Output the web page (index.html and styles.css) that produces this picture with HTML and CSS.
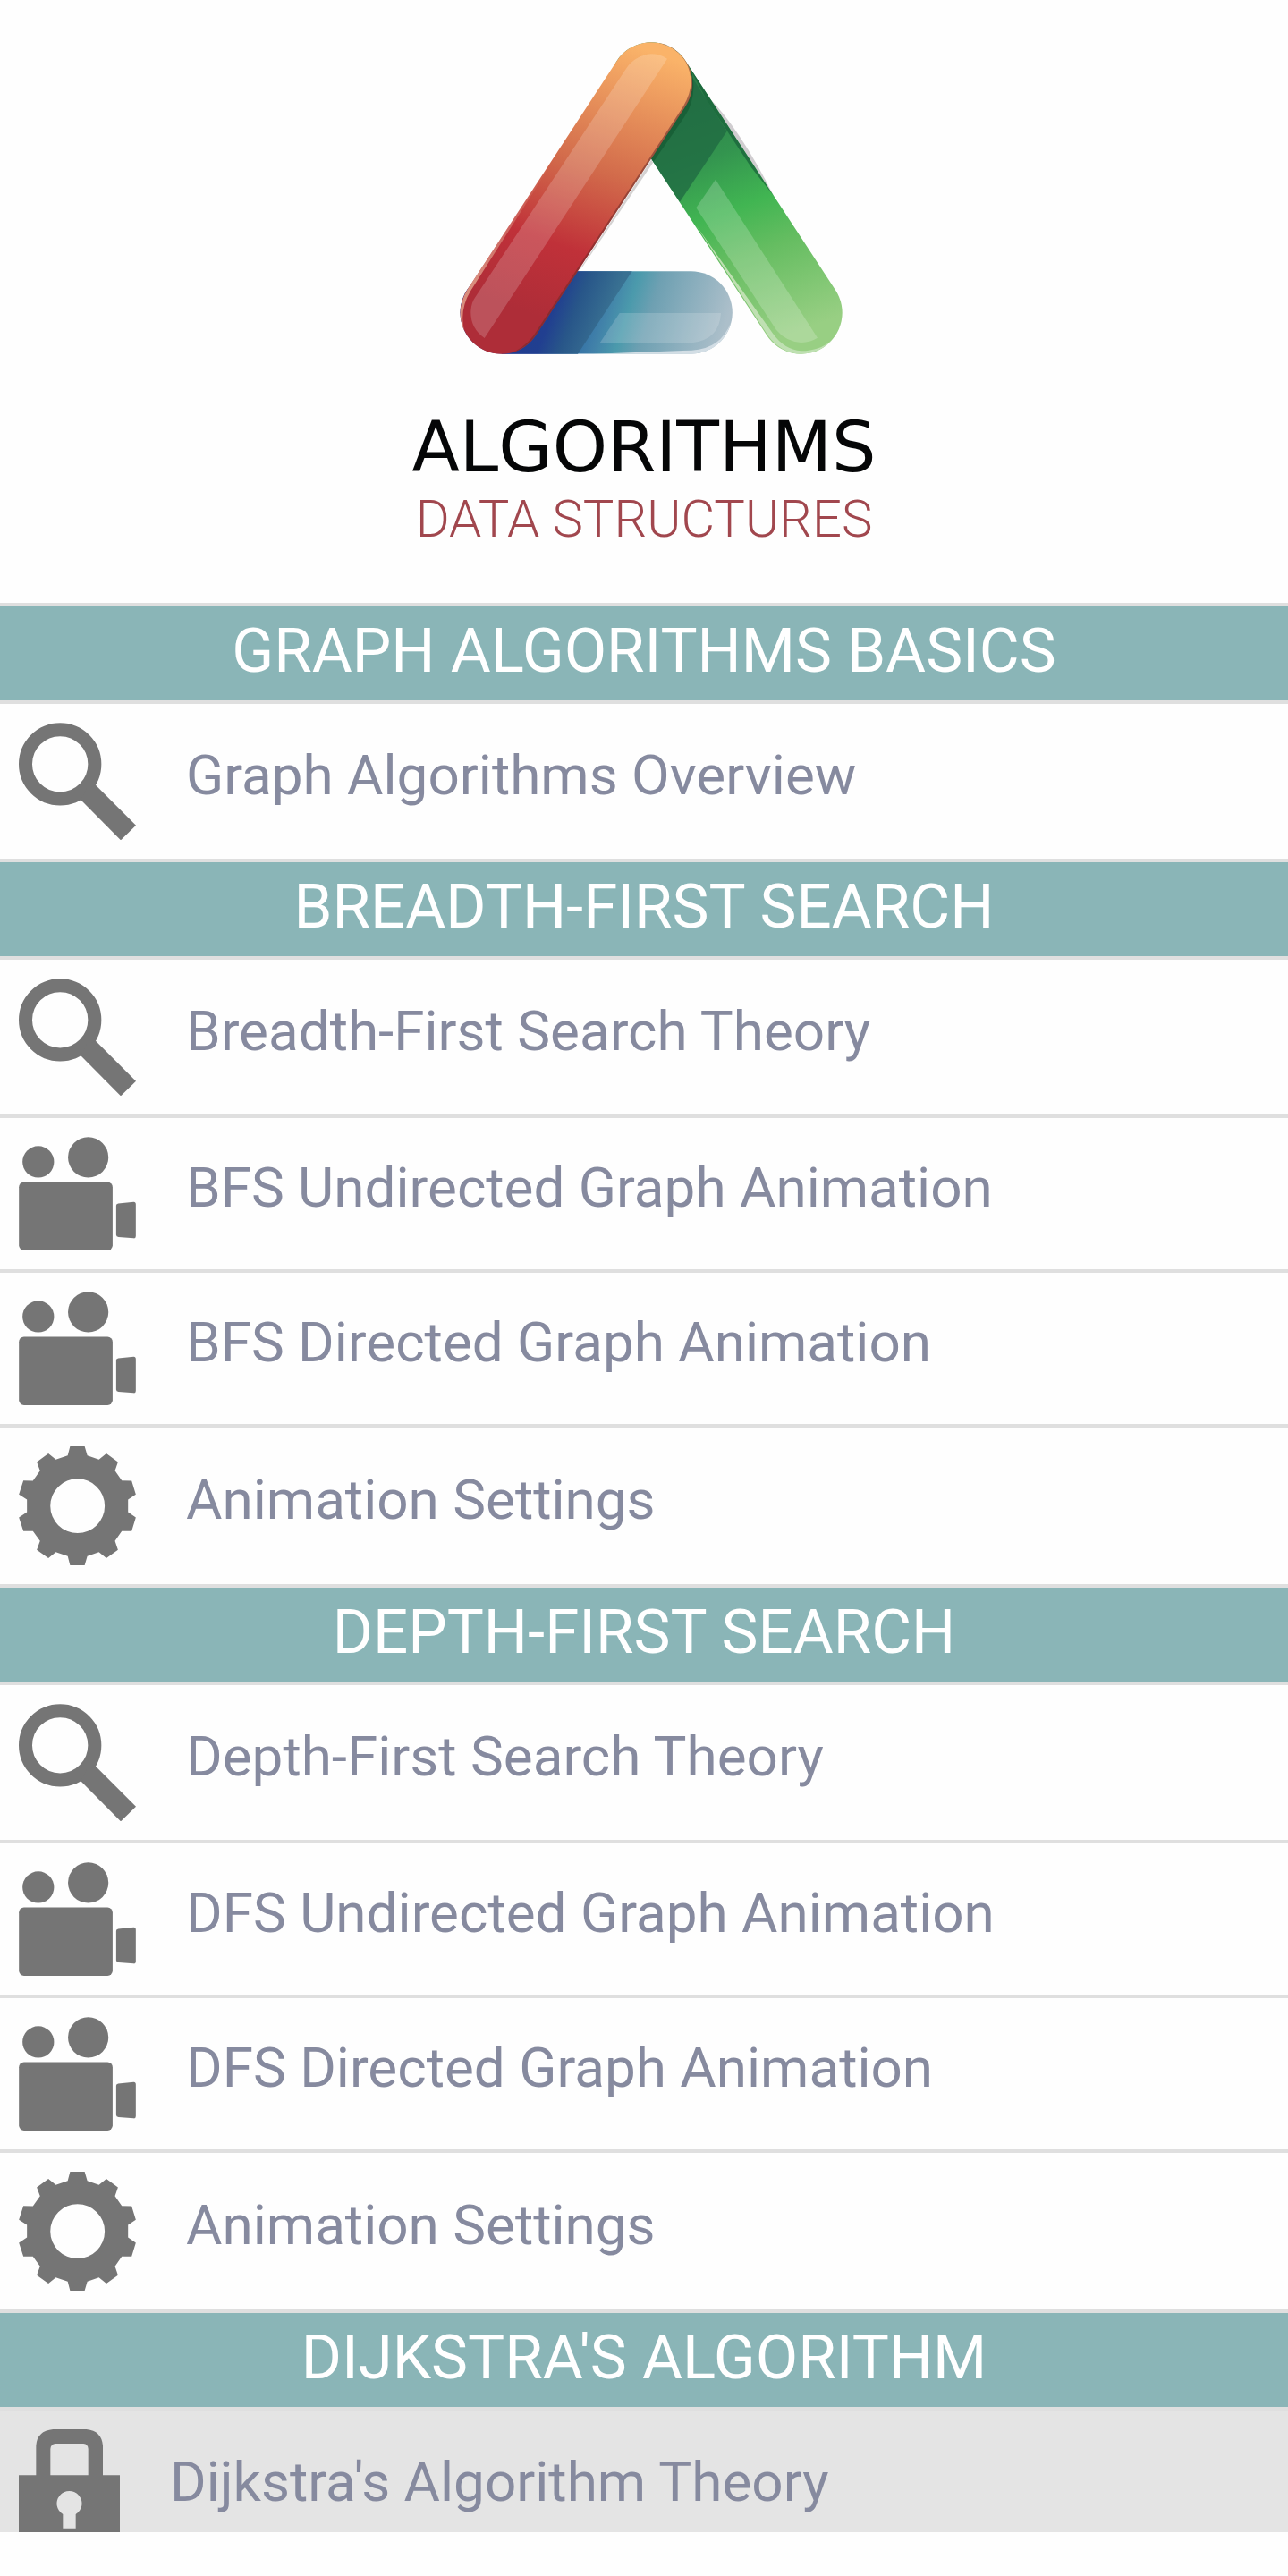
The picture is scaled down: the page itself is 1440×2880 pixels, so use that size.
FILE: index.html
```
<!DOCTYPE html>
<html lang="en">
  <head>
    <title>Algorithms - Data Structures</title>
    <meta charset="UTF-8">
    <meta name="viewport" content="width=device-width,initial-scale=1">
    <link rel="stylesheet" href="styles.css">
  </head>
  <body>
    <!-- icons shared by the menu rows -->
    <svg class="sprite" width="0" height="0" aria-hidden="true">
      <symbol id="icon-search" viewBox="63 443 393 393">
        <circle cx="201.500" cy="582" r="116" fill="none" stroke="currentColor" stroke-width="45"/>
        <path d="M321 652L456 787L405 837L271 702L290 665Z" fill="currentColor"/>
      </symbol>
      <symbol id="icon-camera" viewBox="63 122 393 382">
        <circle cx="128" cy="206" r="53" fill="currentColor"/>
        <circle cx="296" cy="191" r="68" fill="currentColor"/>
        <rect x="63" y="274" width="315" height="230" rx="17" fill="currentColor"/>
        <path d="M397 346L449 341Q456 341 456 349V456Q456 464 449 463L398 459Q390 458 390 451V353Q390 347 397 346Z" fill="currentColor"/>
      </symbol>
      <symbol id="icon-gear" viewBox="63 110 393 400">
        <path fill="currentColor" fill-rule="evenodd" d="M235 110H284L293 141L332 154L357 134L396 163L386 192L409 225L442 226L456 272L430 289V331L456 349L442 395H409L386 428L396 458L357 486L332 466L293 479L284 510H235L227 479L187 466L162 486L123 458L134 428L110 395H78L63 349L90 331V289L63 272L78 225L110 226L134 192L123 163L162 134L187 154L227 141ZM260 219A91 91 0 1 0 260 402A91 91 0 1 0 260 219Z"/>
      </symbol>
      <symbol id="icon-lock" viewBox="63 435 339 393">
        <path fill="currentColor" fill-rule="evenodd" d="M63 589H121V490Q124 440 178 435H290Q341 440 345 490V589H402V828H63ZM169 589H296V501Q295 485 280 483H187Q170 484 169 501ZM211 720V767H254V720A42 42 0 1 0 211 720Z"/>
      </symbol>
    </svg>

    <header class="brand">
      <svg class="brand-logo" viewBox="-60 0 1500 1170" role="img" aria-label="Algorithms logo">
        <defs>
          <linearGradient id="green" gradientUnits="userSpaceOnUse" x1="880" y1="180" x2="1230" y2="1120">
            <stop offset="0" stop-color="#2b7d48"/>
            <stop offset="0.250" stop-color="#33944f"/>
            <stop offset="0.440" stop-color="#41b552"/>
            <stop offset="0.600" stop-color="#65bd61"/>
            <stop offset="0.900" stop-color="#98cf83"/>
          </linearGradient>
          <linearGradient id="red" gradientUnits="userSpaceOnUse" x1="790" y1="110" x2="470" y2="1020">
            <stop offset="0" stop-color="#fab369"/>
            <stop offset="0.450" stop-color="#d26b4b"/>
            <stop offset="0.740" stop-color="#c03139"/>
            <stop offset="1" stop-color="#ae2d38"/>
          </linearGradient>
          <linearGradient id="blue" gradientUnits="userSpaceOnUse" x1="360" y1="900" x2="940" y2="1080">
            <stop offset="0" stop-color="#223d90"/>
            <stop offset="0.150" stop-color="#2660a3"/>
            <stop offset="0.340" stop-color="#4181a9"/>
            <stop offset="0.460" stop-color="#4b9aac"/>
            <stop offset="0.580" stop-color="#6ea0b2"/>
            <stop offset="1" stop-color="#acbfca"/>
          </linearGradient>
          <linearGradient id="shade" gradientUnits="userSpaceOnUse" x1="300" y1="900" x2="560" y2="1000">
            <stop offset="0" stop-color="#203c90"/>
            <stop offset="0.350" stop-color="#213f90"/>
            <stop offset="0.600" stop-color="#285689"/>
            <stop offset="1" stop-color="#397192"/>
          </linearGradient>
          <linearGradient id="edge" gradientUnits="userSpaceOnUse" x1="200" y1="900" x2="600" y2="300">
            <stop offset="0" stop-color="#d98d7d"/>
            <stop offset="0.650" stop-color="#d98d7d" stop-opacity="0"/>
          </linearGradient>
          <clipPath id="green-bar">
            <path d="M830 114L1332 884A138 138 0 0 1 1102 1036L598 266Z"/>
          </clipPath>
        </defs>

        <!-- green leg -->
        <path d="M905 235Q1010 340 1125 567L1080 520Z" fill="#d0cdd0"/>
        <path d="M714 190L1217 959" stroke="url(#green)" stroke-width="276" stroke-linecap="round"/>
        <g clip-path="url(#green-bar)">
          <path d="M800 90L968 350L810 587L690 410Z" fill="#1f6841" opacity="0.750"/>
          <path d="M838 128L1125 567L1050 472L900 245Z" fill="#176039" opacity="0.700"/>
          <path d="M850 150Q870 235 825 303L722 452L700 420L820 150Z" fill="#175c34" opacity="0.800"/>
        </g>
        <path d="M866 668L1106 1036Q1150 1096 1217 1097Q1285 1093 1321 1050Q1280 1087 1217 1087Q1160 1082 1122 1028Z" fill="#bfe0b2"/>
        <path d="M930 512L1272 1043Q1250 1057 1217 1059Q1165 1055 1134 1017L865 607Z" fill="#fff" opacity="0.200"/>

        <!-- blue base -->
        <path d="M212 958H848" stroke="url(#blue)" stroke-width="277" stroke-linecap="round"/>
        <path d="M440 820H650L468 1097H212Z" fill="url(#shade)"/>
        <path d="M520 1097H848Q955 1090 982 990Q948 1080 850 1085Z" fill="#d3dee5"/>
        <path d="M608 960H948Q943 1050 850 1060H542Z" fill="#fff" opacity="0.170"/>

        <!-- red leg -->
        <path d="M715 445L720 456L484 805L470 820Z" fill="#d4d2d2"/>
        <path d="M714 190L212 959" stroke="url(#red)" stroke-width="276" stroke-linecap="round"/>
        <path d="M740 54Q800 62 838 128Q872 205 830 266L328 1033Q300 1078 240 1095Q285 1080 320 1035L822 266Q868 190 830 118Q800 67 740 54Z" fill="#682b29" opacity="0.550"/>
        <path d="M598 114L97 882Q57 950 87 1020Q70 950 107 888Z" fill="url(#edge)"/>
        <path d="M768 107L155 1044Q108 1012 109 955Q110 925 126 904L630 140Q660 96 714 91Q743 91 768 107Z" fill="#fff" opacity="0.180"/>
      </svg>
      <h1 class="brand-name">ALGORITHMS</h1>
      <p class="brand-tagline">DATA STRUCTURES</p>
    </header>

    <main>
      <section>
        <h2 class="section-title">GRAPH ALGORITHMS BASICS</h2>
        <nav class="menu">
          <a class="menu-item" href="#graph-overview">
            <svg class="icon icon-search"><use href="#icon-search"/></svg>
            <span class="menu-label">Graph Algorithms Overview</span>
          </a>
        </nav>
      </section>

      <section>
        <h2 class="section-title">BREADTH-FIRST SEARCH</h2>
        <nav class="menu">
          <a class="menu-item" href="#bfs-theory">
            <svg class="icon icon-search"><use href="#icon-search"/></svg>
            <span class="menu-label">Breadth-First Search Theory</span>
          </a>
          <a class="menu-item" href="#bfs-undirected">
            <svg class="icon icon-camera"><use href="#icon-camera"/></svg>
            <span class="menu-label">BFS Undirected Graph Animation</span>
          </a>
          <a class="menu-item" href="#bfs-directed">
            <svg class="icon icon-camera"><use href="#icon-camera"/></svg>
            <span class="menu-label">BFS Directed Graph Animation</span>
          </a>
          <a class="menu-item" href="#bfs-settings">
            <svg class="icon icon-gear"><use href="#icon-gear"/></svg>
            <span class="menu-label">Animation Settings</span>
          </a>
        </nav>
      </section>

      <section>
        <h2 class="section-title">DEPTH-FIRST SEARCH</h2>
        <nav class="menu">
          <a class="menu-item" href="#dfs-theory">
            <svg class="icon icon-search"><use href="#icon-search"/></svg>
            <span class="menu-label">Depth-First Search Theory</span>
          </a>
          <a class="menu-item" href="#dfs-undirected">
            <svg class="icon icon-camera"><use href="#icon-camera"/></svg>
            <span class="menu-label">DFS Undirected Graph Animation</span>
          </a>
          <a class="menu-item" href="#dfs-directed">
            <svg class="icon icon-camera"><use href="#icon-camera"/></svg>
            <span class="menu-label">DFS Directed Graph Animation</span>
          </a>
          <a class="menu-item" href="#dfs-settings">
            <svg class="icon icon-gear"><use href="#icon-gear"/></svg>
            <span class="menu-label">Animation Settings</span>
          </a>
        </nav>
      </section>

      <section>
        <h2 class="section-title">DIJKSTRA'S ALGORITHM</h2>
        <nav class="menu menu-locked">
          <a class="menu-item" href="#dijkstra-theory">
            <svg class="icon icon-lock"><use href="#icon-lock"/></svg>
            <span class="menu-label">Dijkstra's Algorithm Theory</span>
          </a>
        </nav>
      </section>
    </main>
  </body>
</html>
```
FILE: styles.css
```
body
{
  margin: 0;
  background-color: #fefefe;
  font-family: Roboto, sans-serif;
}
.sprite
{
  position: absolute;
}

/* header */
.brand
{
  display: flex;
  flex-direction: column;
  align-items: center;
  padding: 30px 0 60px;
}
.brand-logo
{
  width: 500px;
  height: 390px;
  margin-bottom: 34px;
  fill: none;
}
.brand-name
{
  margin: 0;
  color: #050607;
  font-family: "DejaVu Sans", sans-serif;
  font-size: 78px;
  font-weight: 400;
  line-height: 92px;
}
.brand-tagline
{
  margin: 0;
  color: #a1474e;
  font-size: 58px;
  font-weight: 300;
  line-height: 68px;
}

/* sections */
.section-title
{
  margin: 0;
  padding-bottom: 6px;
  border-top: 4px solid #dfdfdf;
  border-bottom: 4px solid #dfdfdf;
  background-color: #8ab5b7;
  color: #fff;
  font-size: 69px;
  font-weight: 400;
  line-height: 99px;
  text-align: center;
}
.menu-item
{
  display: flex;
  align-items: center;
  gap: 56px;
  padding: 21px;
  color: #868a9f;
  font-size: 62px;
  text-decoration: none;
}
.menu-item + .menu-item
{
  border-top: 4px solid #dfdfdf;
}
.menu-label
{
  padding-bottom: 14px;
  line-height: 72px;
}

/* locked list, only the top of it shows */
.menu-locked
{
  height: 136px;
  overflow: hidden;
  background-color: #e4e4e4;
}

.icon
{
  flex: none;
  width: 131px;
  color: #757575;
}
.icon-search
{
  height: 131px;
}
.icon-camera
{
  height: 127px;
}
.icon-gear
{
  height: 133px;
}
.icon-lock
{
  width: 113px;
  height: 131px;
}
```
